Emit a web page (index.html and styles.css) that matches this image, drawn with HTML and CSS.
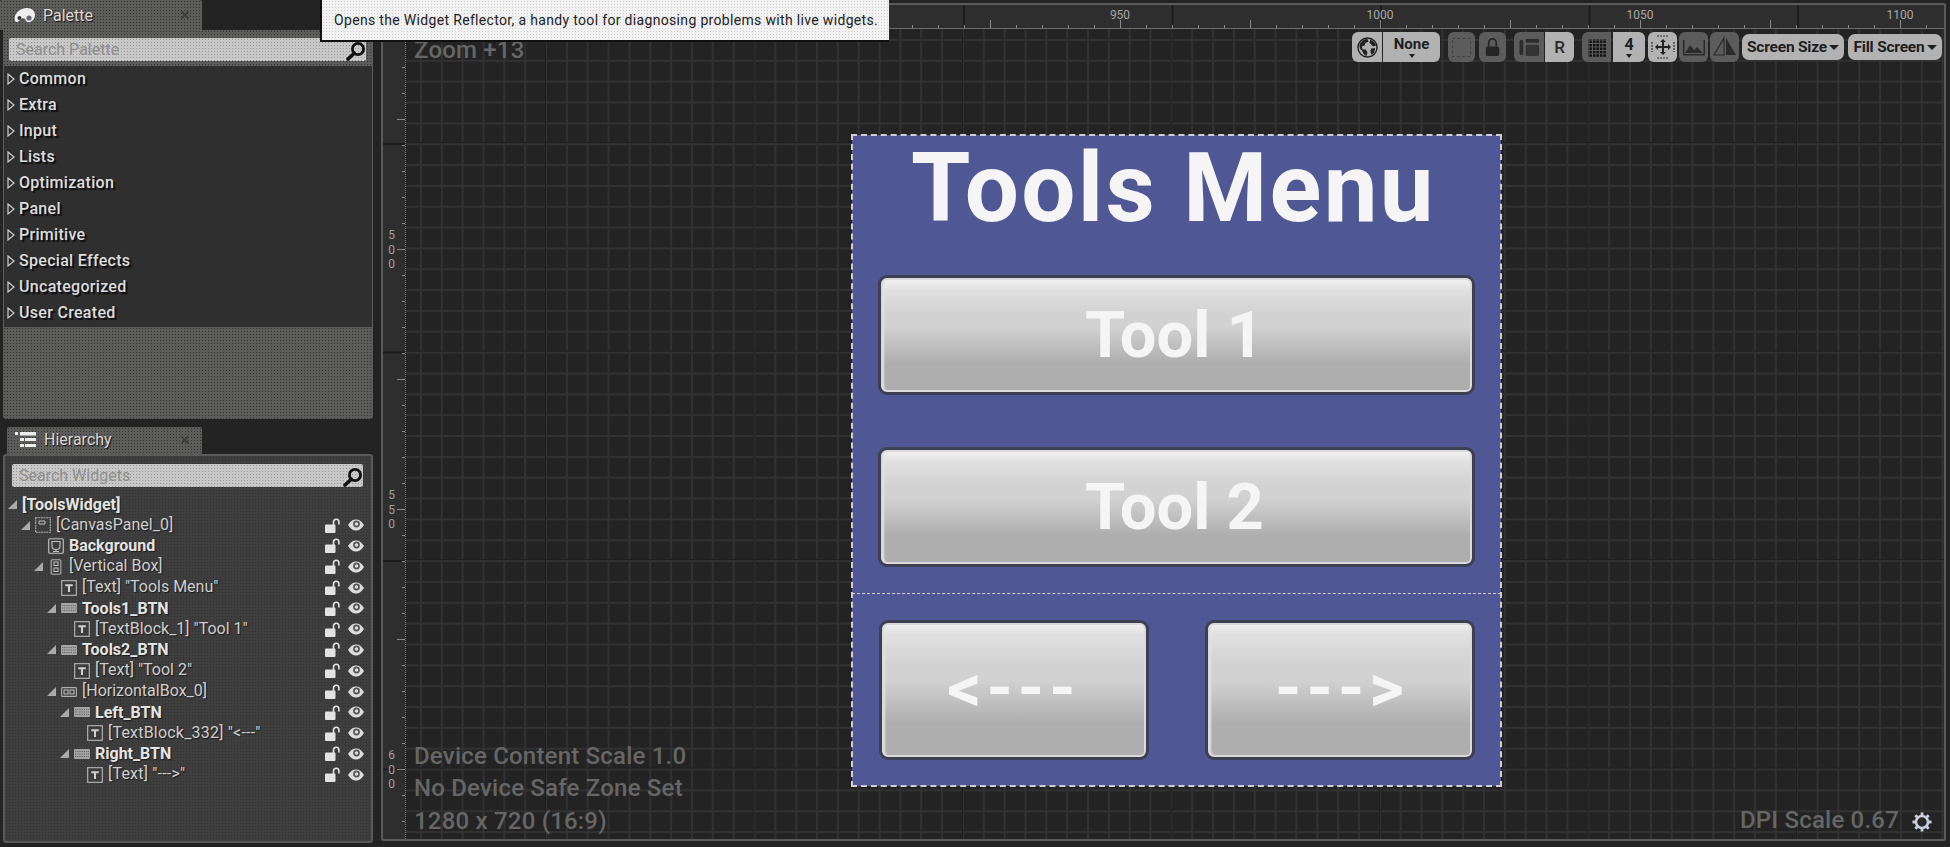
FILE: index.html
```html
<!DOCTYPE html>
<html lang="en">
<head>
<meta charset="utf-8">
<title>Tools Widget</title>
<link rel="stylesheet" href="styles.css">
</head>
<body>
<svg class="defs" width="0" height="0">
  <symbol id="i-search" viewBox="0 0 20 20"><circle cx="12" cy="8" r="5.6" fill="none" stroke="#111" stroke-width="2.8"/><path d="M8 12.5 2 18" stroke="#111" stroke-width="3.6" stroke-linecap="round"/></symbol>
  <symbol id="i-unlock" viewBox="0 0 15 15"><path d="M8.500 7V4a2.700 2.700 0 0 1 5.400 0V6.500" fill="none" stroke="#e2e2e2" stroke-width="1.600"/><rect x="0" y="6.500" width="10.500" height="8.500" rx="1" fill="#e2e2e2"/></symbol>
  <symbol id="i-eye" viewBox="0 0 16 12"><path d="M0 6C3 1.500 5.500.4 8 .4S13 1.500 16 6C13 10.500 10.500 11.600 8 11.600S3 10.500 0 6Z" fill="#dcdcdc"/><circle cx="8.500" cy="5" r="3.400" fill="#555"/><circle cx="8.500" cy="5" r="1.700" fill="#dcdcdc"/></symbol>
  <symbol id="i-t" viewBox="0 0 14 14"><rect x=".6" y=".6" width="12.800" height="12.800" fill="none" stroke="#b4b4b4" stroke-width="1"/><path d="M3.700 3.800h6.600v1.600H7.900v5H6.100v-5H3.700Z" fill="#cfcfcf"/></symbol>
  <symbol id="i-btn" viewBox="0 0 16 10"><rect width="16" height="10" rx="1" fill="#a4a4a4"/><path d="M1 2.500h14M1 5h14M1 7.500h14" stroke="#5c5c5c" stroke-width=".9" stroke-dasharray="1.200 1"/></symbol>
  <symbol id="i-canvas" viewBox="0 0 16 16"><rect x=".7" y=".7" width="14.600" height="14.600" fill="none" stroke="#b0b0b0" stroke-width="1.100" stroke-dasharray="2 .6"/><path d="M4 4h6v3H4z" fill="none" stroke="#c4c4c4"/></symbol>
  <symbol id="i-image" viewBox="0 0 16 16"><rect x=".7" y=".7" width="14.600" height="14.600" rx="1" fill="none" stroke="#c4c4c4" stroke-width="1.100"/><path d="M4 3.500h8v5a4 3 0 0 1-8 0ZM8 11v2.500M5 13.500h6" fill="none" stroke="#c4c4c4" stroke-width="1.100"/></symbol>
  <symbol id="i-vbox" viewBox="0 0 11 16"><rect x=".7" y=".7" width="9.600" height="14.600" rx="1" fill="none" stroke="#b0b0b0" stroke-width="1.100"/><rect x="3.500" y="3" width="4" height="3.500" fill="none" stroke="#c4c4c4"/><rect x="3.500" y="9" width="4" height="3.500" fill="none" stroke="#c4c4c4"/></symbol>
  <symbol id="i-hbox" viewBox="0 0 16 10"><rect x=".6" y=".6" width="14.800" height="8.800" rx="1" fill="none" stroke="#b0b0b0" stroke-width="1.100"/><rect x="3" y="3" width="4" height="4" fill="none" stroke="#c4c4c4"/><rect x="9" y="3" width="4" height="4" fill="none" stroke="#c4c4c4"/></symbol>
  <symbol id="i-open" viewBox="0 0 9 9"><path d="M9 0v9H0Z" fill="#aaa"/></symbol>
  <symbol id="i-closed" viewBox="0 0 8 12"><path d="M1 1l6 5-6 5Z" fill="none" stroke="#ccc" stroke-width="1.200"/></symbol>
  <symbol id="i-close" viewBox="0 0 10 10"><path d="M1.500 1.500l7 7M8.500 1.500l-7 7" stroke="#3e3e3e" stroke-width="2"/></symbol>
</svg>

<div class="app">
  <aside class="side">
    <section class="dock">
      <header class="tab tab-palette dots">
        <svg class="tab-icon" viewBox="0 0 22 17"><path d="M1 14C-1 8 5 1 13 1c5 0 8 3 8 7 0 3-2 6-5 7-3 1-4-1-5-3-1-1-3-1-5 1-2 2-4 3-5 1Z" fill="#eee"/><circle cx="5.500" cy="11" r="2" fill="#333"/><circle cx="15" cy="11" r="2.600" fill="#667"/></svg>
        <span class="tab-label">Palette</span>
        <svg class="tab-close"><use href="#i-close"/></svg>
      </header>
      <div class="panel panel-palette dots">
        <div class="search search-palette dots-light"><span>Search Palette</span><svg class="search-icon"><use href="#i-search"/></svg></div>
        <ul class="cats">
          <li><svg class="cat-arrow"><use href="#i-closed"/></svg>Common</li>
          <li><svg class="cat-arrow"><use href="#i-closed"/></svg>Extra</li>
          <li><svg class="cat-arrow"><use href="#i-closed"/></svg>Input</li>
          <li><svg class="cat-arrow"><use href="#i-closed"/></svg>Lists</li>
          <li><svg class="cat-arrow"><use href="#i-closed"/></svg>Optimization</li>
          <li><svg class="cat-arrow"><use href="#i-closed"/></svg>Panel</li>
          <li><svg class="cat-arrow"><use href="#i-closed"/></svg>Primitive</li>
          <li><svg class="cat-arrow"><use href="#i-closed"/></svg>Special Effects</li>
          <li><svg class="cat-arrow"><use href="#i-closed"/></svg>Uncategorized</li>
          <li><svg class="cat-arrow"><use href="#i-closed"/></svg>User Created</li>
        </ul>
      </div>
    </section>
    <section class="dock dock-tree">
      <header class="tab tab-tree dots">
        <svg class="tab-icon tab-icon-tree" viewBox="0 0 21 17"><path d="M0 1h3v3H0zM5 1h16v3.500H5zM5 7h4v3H5zM10 7h11v3H10zM5 13h4v3H5zM10 13h11v3H10z" fill="#eee"/></svg>
        <span class="tab-label">Hierarchy</span>
        <svg class="tab-close"><use href="#i-close"/></svg>
      </header>
      <div class="panel panel-tree dots-soft">
        <div class="search search-tree dots-light"><span>Search Widgets</span><svg class="search-icon"><use href="#i-search"/></svg></div>
        <ul class="tree">
          <li class="row l0 root"><svg class="arrow"><use href="#i-open"/></svg><span class="name strong">[ToolsWidget]</span></li>
          <li class="row l1"><svg class="arrow"><use href="#i-open"/></svg><svg class="wicon"><use href="#i-canvas"/></svg><span class="name">[CanvasPanel_0]</span><span class="state"><svg class="lock"><use href="#i-unlock"/></svg><svg class="eye"><use href="#i-eye"/></svg></span></li>
          <li class="row l2"><span class="arrow"></span><svg class="wicon"><use href="#i-image"/></svg><span class="name strong">Background</span><span class="state"><svg class="lock"><use href="#i-unlock"/></svg><svg class="eye"><use href="#i-eye"/></svg></span></li>
          <li class="row l2"><svg class="arrow"><use href="#i-open"/></svg><svg class="wicon"><use href="#i-vbox"/></svg><span class="name">[Vertical Box]</span><span class="state"><svg class="lock"><use href="#i-unlock"/></svg><svg class="eye"><use href="#i-eye"/></svg></span></li>
          <li class="row l3"><span class="arrow"></span><svg class="wicon"><use href="#i-t"/></svg><span class="name">[Text] "Tools Menu"</span><span class="state"><svg class="lock"><use href="#i-unlock"/></svg><svg class="eye"><use href="#i-eye"/></svg></span></li>
          <li class="row l3"><svg class="arrow"><use href="#i-open"/></svg><svg class="wicon"><use href="#i-btn"/></svg><span class="name strong">Tools1_BTN</span><span class="state"><svg class="lock"><use href="#i-unlock"/></svg><svg class="eye"><use href="#i-eye"/></svg></span></li>
          <li class="row l4"><span class="arrow"></span><svg class="wicon"><use href="#i-t"/></svg><span class="name">[TextBlock_1] "Tool 1"</span><span class="state"><svg class="lock"><use href="#i-unlock"/></svg><svg class="eye"><use href="#i-eye"/></svg></span></li>
          <li class="row l3"><svg class="arrow"><use href="#i-open"/></svg><svg class="wicon"><use href="#i-btn"/></svg><span class="name strong">Tools2_BTN</span><span class="state"><svg class="lock"><use href="#i-unlock"/></svg><svg class="eye"><use href="#i-eye"/></svg></span></li>
          <li class="row l4"><span class="arrow"></span><svg class="wicon"><use href="#i-t"/></svg><span class="name">[Text] "Tool 2"</span><span class="state"><svg class="lock"><use href="#i-unlock"/></svg><svg class="eye"><use href="#i-eye"/></svg></span></li>
          <li class="row l3"><svg class="arrow"><use href="#i-open"/></svg><svg class="wicon"><use href="#i-hbox"/></svg><span class="name">[HorizontalBox_0]</span><span class="state"><svg class="lock"><use href="#i-unlock"/></svg><svg class="eye"><use href="#i-eye"/></svg></span></li>
          <li class="row l4"><svg class="arrow"><use href="#i-open"/></svg><svg class="wicon"><use href="#i-btn"/></svg><span class="name strong">Left_BTN</span><span class="state"><svg class="lock"><use href="#i-unlock"/></svg><svg class="eye"><use href="#i-eye"/></svg></span></li>
          <li class="row l5"><span class="arrow"></span><svg class="wicon"><use href="#i-t"/></svg><span class="name name-dash">[TextBlock_332] "&lt;---"</span><span class="state"><svg class="lock"><use href="#i-unlock"/></svg><svg class="eye"><use href="#i-eye"/></svg></span></li>
          <li class="row l4"><svg class="arrow"><use href="#i-open"/></svg><svg class="wicon"><use href="#i-btn"/></svg><span class="name strong">Right_BTN</span><span class="state"><svg class="lock"><use href="#i-unlock"/></svg><svg class="eye"><use href="#i-eye"/></svg></span></li>
          <li class="row l5"><span class="arrow"></span><svg class="wicon"><use href="#i-t"/></svg><span class="name name-dash">[Text] "---&gt;"</span><span class="state"><svg class="lock"><use href="#i-unlock"/></svg><svg class="eye"><use href="#i-eye"/></svg></span></li>
        </ul>
      </div>
    </section>
  </aside>

  <main class="viewport">
    <div class="ruler-left">
      <span class="rl-cell">5<br>0<br>0</span>
      <span class="rl-cell">5<br>5<br>0</span>
      <span class="rl-cell">6<br>0<br>0</span>
    </div>
    <div class="ruler-top">
      <span class="rt-cell">950</span>
      <span class="rt-cell">1000</span>
      <span class="rt-cell">1050</span>
      <span class="rt-cell">1100</span>
    </div>
    <div class="canvas dots-canvas">
      <div class="zoom-info">Zoom +13</div>
      <div class="artboard">
        <h1 class="title">Tools Menu</h1>
        <button class="ui-btn ui-btn-wide">Tool 1</button>
        <button class="ui-btn ui-btn-wide">Tool 2</button>
        <div class="hbox">
          <button class="ui-btn ui-btn-half ui-btn-back">&lt;---</button>
          <button class="ui-btn ui-btn-half">---&gt;</button>
        </div>
      </div>
      <div class="device-info">
        <div>Device Content Scale 1.0</div>
        <div>No Device Safe Zone Set</div>
        <div>1280 x 720 (16:9)</div>
      </div>
      <div class="dpi">
        <span>DPI Scale 0.67</span>
        <svg class="gear" viewBox="0 0 20 20"><circle cx="10" cy="10" r="6" fill="none" stroke="#c9cde0" stroke-width="2.600"/><path d="M10 0.500v4M10 15.500v4M0.500 10h4M15.500 10h4M3.300 3.300l3 3M13.700 13.700l3 3M16.700 3.300l-3 3M6.300 13.700l-3 3" stroke="#c9cde0" stroke-width="2.800"/></svg>
      </div>
    </div>

    <div class="toolbar">
      <div class="seg">
        <span class="tb tb-light tb-globe">
          <svg class="tb-icon" viewBox="0 0 22 22"><circle cx="11" cy="11" r="10" fill="#b0b0b0" stroke="#222" stroke-width="1.500"/><path d="M3 7c2-3 5-5 8-5l1 3-3 1-1 3-3 1 1 3 3 0 2 3-1 4c-3-1-4-4-5-6-2-1-3-4-2-7ZM14 3c3 1 5 3 6 6l-3 1-2-2-2-2ZM15 12l4-.5-1 5-3 2-1-4Z" fill="#222"/></svg>
        </span>
        <span class="tb tb-light tb-none"><b>None</b><i class="caret"></i></span>
      </div>
      <span class="tb tb-dark tb-single">
        <svg class="tb-icon" viewBox="0 0 22 22"><rect x="1.500" y="1.500" width="19" height="19" fill="none" stroke="#3c3c3c" stroke-dasharray="2.500 3"/></svg>
      </span>
      <span class="tb tb-dark tb-single tb-near">
        <svg class="tb-icon" viewBox="0 0 22 22"><path d="M7 10V6a4 4 0 0 1 8 0v4" fill="none" stroke="#252525" stroke-width="1.800"/><rect x="4" y="10" width="14" height="10" rx="2" fill="#252525"/></svg>
      </span>
      <div class="seg seg-gap">
        <span class="tb tb-dark tb-layout">
          <svg class="tb-icon" viewBox="0 0 22 22"><rect x="0.500" y="3" width="4" height="16" rx="2" fill="#2c2c2c"/><rect x="7" y="2" width="14" height="4" rx="1" fill="#2c2c2c"/><rect x="7" y="8" width="14" height="12" rx="2" fill="#333"/></svg>
        </span>
        <span class="tb tb-light tb-r">R</span>
      </div>
      <div class="seg seg-gap">
        <span class="tb tb-dark tb-grid">
          <svg class="tb-icon" viewBox="0 0 20 20"><defs><pattern id="gridp" width="3.300" height="3.300" patternUnits="userSpaceOnUse"><rect width="2.400" height="2.400" fill="#111"/></pattern></defs><rect x="2" y="2" width="17" height="17" fill="url(#gridp)"/></svg>
        </span>
        <span class="tb tb-light tb-four"><b>4</b><i class="caret"></i></span>
      </div>
      <span class="tb tb-light tb-single tb-tight">
        <svg class="tb-icon tb-icon-big" viewBox="0 0 24 24"><path d="M12 5v14M5 12h14" stroke="#222" stroke-width="2"/><path d="M12 4l-3 3h6ZM12 20l-3-3h6ZM4 12l3-3v6ZM20 12l-3-3v6Z" fill="#222"/><path d="M6 1h12M6 23h12M1 7v10M23 7v10" stroke="#333" stroke-width="1.200" stroke-dasharray="2 1"/></svg>
      </span>
      <span class="tb tb-dark tb-single tb-near2">
        <svg class="tb-icon tb-icon-big" viewBox="0 0 24 24"><path d="M1 5h1.500v14h19V5H23v15.500H1Z" fill="#2a2a2a"/><path d="M3 18l5-8 4 5 3-3 6 6Z" fill="#2a2a2a"/></svg>
      </span>
      <span class="tb tb-dark tb-single tb-near2">
        <svg class="tb-icon tb-icon-big" viewBox="0 0 24 24"><path d="M1 20L11 3v17Z" fill="none" stroke="#2a2a2a" stroke-width="1.200"/><path d="M13 3l10 17H13Z" fill="#2a2a2a"/></svg>
      </span>
      <span class="tb-menu tb-near3">Screen Size<i class="caret-big"></i></span>
      <span class="tb-menu tb-fill">Fill Screen<i class="caret-big"></i></span>
    </div>
  </main>

  <div class="tooltip dots-tip">Opens the Widget Reflector, a handy tool for diagnosing problems with live widgets.</div>
</div>
</body>
</html>
```
FILE: styles.css
```css
* { box-sizing: border-box; }
html, body { margin: 0; height: 100%; }
body {
  width: 1950px;
  height: 847px;
  overflow: hidden;
  background: #232323;
  font-family: Roboto, "Liberation Sans", sans-serif;
}
.defs { position: absolute; }
ul { list-style: none; margin: 0; padding: 0; }

.app { position: relative; display: flex; width: 1950px; height: 847px; }

/* dither textures */
.dots {
  background-image: radial-gradient(circle, rgba(20,20,20,.55) .7px, transparent .9px);
  background-size: 3px 3px;
}
.dots-soft {
  background-image: radial-gradient(circle, rgba(20,20,20,.3) .6px, transparent .8px);
  background-size: 3px 3px;
}
.dots-light {
  background-image: radial-gradient(circle, rgba(110,110,110,.55) .6px, transparent .8px);
  background-size: 3px 3px;
}
.dots-tip {
  background-image: radial-gradient(circle, rgba(170,170,170,.5) .6px, transparent .8px);
  background-size: 3px 3px;
}

/* left column */
.side { width: 376px; flex: none; display: flex; flex-direction: column; }
.dock { display: flex; flex-direction: column; }
.dock-tree { margin-top: 8px; }

.tab {
  display: flex;
  align-items: center;
  background-color: #5c5c5a;
  color: #d8d8d8;
  border-radius: 2px 2px 0 0;
}
.tab-palette { width: 202px; height: 30px; padding-left: 14px; }
.tab-tree { width: 195px; height: 27px; margin-left: 7px; padding: 0 0 2px 8px; }
.tab-icon { width: 22px; height: 17px; flex: none; }
.tab-icon-tree { width: 21px; }
.tab-label {
  margin-left: 7px;
  flex: 1;
  font-size: 16px;
  text-shadow: 1px 1px 1px #111;
}
.tab-tree .tab-label { margin-left: 8px; }
.tab-close { width: 10px; height: 10px; margin-right: 12px; flex: none; }

.panel { width: 370px; margin-left: 3px; border-radius: 0 0 3px 3px; }
.panel-palette {
  height: 389px;
  background-color: #5c5c5a;
  padding: 8px 1px 0;
}
.panel-tree {
  height: 389px;
  background-color: #3e3e3e;
  border: 2px solid #5a5a5a;
  border-radius: 3px;
  padding: 8px 7px 0;
}

.search {
  position: relative;
  height: 23px;
  display: flex;
  align-items: center;
  background-color: #c8c8c8;
  border-radius: 2px;
  color: #8e8e8e;
  font-size: 16px;
  padding-left: 7px;
}
.search-palette { width: 357px; margin-left: 5px; }
.search-tree { width: 351px; }
.search-icon { position: absolute; right: 0; top: 3px; width: 20px; height: 20px; }

.cats {
  margin-top: 5px;
  height: 261px;
  background: #2f2f2f;
}
.cats li {
  height: 26px;
  display: flex;
  align-items: center;
  padding: 0 0 1px 3px;
  font-size: 16px;
  font-weight: 500;
  letter-spacing: .3px;
  color: #dcdcdc;
  text-shadow: 2px 2px 1px #0c0c0c;
}
.cat-arrow { width: 8px; height: 12px; margin-right: 4px; flex: none; }

.tree { margin: 7px 0 0 -4px; width: 356px; }
.row {
  height: 20.8px;
  display: flex;
  align-items: center;
  color: #cfcfcf;
  font-size: 16px;
}
.l0 { padding-left: 0; }
.l1 { padding-left: 13px; }
.l2 { padding-left: 26px; }
.l3 { padding-left: 39px; }
.l4 { padding-left: 52px; }
.l5 { padding-left: 65px; }
.arrow { width: 9px; height: 9px; margin-right: 5px; flex: none; display: block; }
.wicon { width: 16px; height: 16px; margin-right: 5px; flex: none; }
.name { flex: 1; white-space: nowrap; padding-bottom: 2px; text-shadow: 1px 1px 1px #1a1a1a; }
.name-dash { letter-spacing: .2px; }
.strong { font-weight: 700; font-size: 16px; color: #e4e4e4; padding-bottom: 0; }
.state { display: flex; align-items: center; gap: 8px; flex: none; }
.lock { width: 15px; height: 15px; }
.eye { width: 16px; height: 12px; }

/* viewport */
.viewport {
  position: relative;
  width: 1565px;
  height: 838px;
  margin: 3px 0 0 5px;
  border: 2px solid #5a5a5a;
  border-radius: 2px;
  display: grid;
  grid-template-columns: 23px 1fr;
  grid-template-rows: 24px 1fr;
  overflow: hidden;
  background: #2e2e2e;
}
.ruler-top {
  grid-column: 2;
  grid-row: 1;
  margin-left: -23px;
  display: flex;
  padding-left: 607px;
  overflow: hidden;
  background-color: #2e2e2e;
  background-image:
    linear-gradient(#6c6c6c, #6c6c6c),
    linear-gradient(90deg, #8a8a8a 1px, transparent 1px),
    linear-gradient(90deg, #8a8a8a 1px, transparent 1px),
    linear-gradient(90deg, #1c1c1c 2px, transparent 2px);
  background-size: 100% 1px, 130px 9px, 26px 4px, 208.5px 100%;
  background-position: 0 100%, 87px 100%, 9px 100%, 163px 0;
  background-repeat: repeat-x;
}
.rt-cell {
  flex: 0 0 260px;
  text-align: center;
  font-size: 12px;
  line-height: 20px;
  color: #a8a8a8;
}
.ruler-left {
  grid-column: 1;
  grid-row: 1 / span 2;
  display: flex;
  flex-direction: column;
  padding-top: 114px;
  overflow: hidden;
  background-color: #2e2e2e;
  border-right: 1px dotted #777;
  background-image:
    linear-gradient(#8a8a8a 1px, transparent 1px),
    linear-gradient(#8a8a8a 1px, transparent 1px),
    linear-gradient(#1c1c1c 2px, transparent 2px);
  background-size: 8px 130px, 3px 26px, 100% 208.5px;
  background-position: 100% 114px, 100% 10px, 0 138px;
  background-repeat: repeat-y;
  position: relative;
  z-index: 1;
}
.rl-cell {
  flex: 0 0 260px;
  padding-top: 109px;
  padding-right: 5px;
  text-align: center;
  font-size: 12px;
  line-height: 14.500px;
  color: #a0a0a0;
}

.canvas {
  grid-column: 2;
  grid-row: 2;
  position: relative;
  background-color: #232323;
}
.dots-canvas {
  background-image:
    linear-gradient(#1f1f1f 1px, transparent 1px),
    linear-gradient(90deg, #1f1f1f 1px, transparent 1px),
    linear-gradient(#313131 2px, transparent 2px),
    linear-gradient(90deg, #313131 2px, transparent 2px);
  background-size: 100% 208.5px, 208.5px 100%, 100% 20.85px, 20.85px 100%;
  background-position: 0 113px, 139px 0, 0 10px, 14px 0;
}

.zoom-info {
  position: absolute;
  left: 8px;
  top: 5px;
  font-size: 24px;
  font-weight: 500;
  letter-spacing: .2px;
  line-height: 32px;
  color: #666;
}
.device-info {
  position: absolute;
  left: 8px;
  bottom: 2px;
  font-size: 24px;
  font-weight: 500;
  letter-spacing: .2px;
  line-height: 32.500px;
  color: #666;
  white-space: nowrap;
}
.dpi {
  position: absolute;
  right: 12px;
  bottom: 3px;
  display: flex;
  align-items: center;
  gap: 13px;
  font-size: 24px;
  font-weight: 500;
  letter-spacing: .2px;
  line-height: 32px;
  color: #666;
}
.gear { width: 20px; height: 20px; margin-top: 4px; }

/* the widget */
.artboard {
  position: absolute;
  left: 446px;
  top: 106px;
  width: 649px;
  height: 651px;
  background: #4f5894;
  outline: 2px dashed #cfcfcf;
  outline-offset: -1px;
  display: flex;
  flex-direction: column;
  align-items: center;
}
.title {
  margin: 0;
  height: 140px;
  padding-right: 6px;
  font-size: 96px;
  font-weight: 700;
  line-height: 106px;
  letter-spacing: 2.300px;
  color: #f5f5f5;
  white-space: nowrap;
}
.ui-btn {
  display: block;
  border: 3px solid #3d3f52;
  border-radius: 9px;
  padding: 0 4px 0 0;
  color: #f5f5f5;
  font-family: inherit;
  font-weight: 700;
  font-size: 65px;
  background:
    linear-gradient(#f2f2f2 0, #e0e0e0 12px, #d2d2d2 32%, #d2d2d2 42%, #aeaeae 75%, #aeaeae 100%);
  box-shadow: inset 0 0 0 2px #dadada, inset 3px 0 2px #e6e6e6;
}
.ui-btn-wide { width: 597px; height: 120px; }
.ui-btn-wide + .ui-btn-wide { margin-top: 52px; }
.hbox {
  width: 100%;
  margin-top: 26px;
  padding: 26px 26px 25px 27px;
  flex: 1;
  display: flex;
  justify-content: space-between;
  border-top: 1px dashed #cfcfcf;
}
.ui-btn-half {
  width: 270px;
  height: 140px;
  padding: 0 0 4px 4px;
  font-size: 67px;
  letter-spacing: 5px;
}
.ui-btn-back { padding-left: 0; }

/* toolbar */
.toolbar {
  position: absolute;
  top: 27px;
  right: 2px;
  display: flex;
  align-items: center;
  z-index: 2;
}
.seg { display: flex; border-radius: 6px; overflow: hidden; gap: 1px; }
.seg-gap { margin-left: 8px; }
.tb {
  display: flex;
  flex-direction: column;
  align-items: center;
  justify-content: center;
  height: 30px;
  color: #1e1e1e;
}
.tb-light { background: #b2b2b2; }
.tb-dark { background: #5c5c5c; }
.tb-single { width: 27px; margin-left: 8px; border-radius: 6px; }
.tb-near { margin-left: 4px; }
.tb-tight { width: 29px; margin-left: 3px; }
.tb-near2 { width: 29px; margin-left: 2px; }
.tb-globe { width: 30px; }
.tb-none { width: 57px; font-size: 15px; line-height: 15px; }
.tb-layout { width: 30px; }
.tb-r { width: 29px; font-size: 17px; font-weight: 500; color: #2a2a2a; }
.tb-grid { width: 29px; }
.tb-four { width: 32px; font-size: 16px; line-height: 15px; margin-left: 1px; }
.tb-icon { width: 21px; height: 21px; }
.tb-icon-big { width: 24px; height: 24px; }
.caret {
  width: 0;
  height: 0;
  margin-top: 2px;
  border: 3.500px solid transparent;
  border-top: 4px solid #1e1e1e;
  border-bottom: 0;
}
.tb-menu {
  display: flex;
  align-items: center;
  justify-content: center;
  height: 26px;
  background: #b2b2b2;
  border-radius: 7px;
  font-size: 15.500px;
  font-weight: 700;
  letter-spacing: -.2px;
  color: #1e1e1e;
  white-space: nowrap;
}
.tb-near3 { width: 102px; margin-left: 3px; }
.tb-fill { width: 94px; margin-left: 4px; }
.caret-big {
  width: 0;
  height: 0;
  margin-left: 2px;
  border: 5px solid transparent;
  border-top: 5px solid #1e1e1e;
  border-bottom: 0;
}

/* tooltip */
.tooltip {
  position: absolute;
  left: 320px;
  top: 0;
  width: 569px;
  height: 42px;
  background-color: #f2f2f2;
  border-left: 2px solid #111;
  border-bottom: 2px solid #111;
  padding-left: 12px;
  display: flex;
  align-items: center;
  font-size: 14px;
  letter-spacing: .33px;
  color: #222;
  white-space: nowrap;
  z-index: 5;
}
```
